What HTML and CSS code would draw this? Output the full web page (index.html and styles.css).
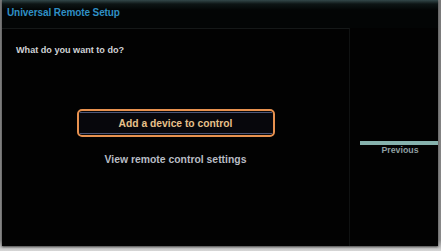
FILE: index.html
```html
<!DOCTYPE html>
<html>
<head>
<meta charset="utf-8">
<link rel="stylesheet" href="styles.css">
</head>
<body>
<div class="frame">
  <div class="screen">
    <div class="header"><span class="title">Universal Remote Setup</span></div>
    <div class="content">
      <div class="panel">
        <div class="question">What do you want to do?</div>
        <div class="options">
          <div class="option selected"><div class="option-inner">Add a device to control</div></div>
          <div class="option">View remote control settings</div>
        </div>
      </div>
      <div class="side">
        <div class="prev">Previous</div>
      </div>
    </div>
  </div>
</div>
</body>
</html>
```
FILE: styles.css
```css
html, body {
  margin: 0;
  padding: 0;
  background: #c9c9c9;
  width: 441px;
  height: 251px;
  overflow: hidden;
  font-family: "Liberation Sans", Arial, sans-serif;
  font-weight: bold;
}
.frame {
  width: 441px;
  height: 251px;
  padding: 0 3px 5px 2px;
  box-sizing: border-box;
  background: linear-gradient(to bottom, #7a7a7a 0, #8a8a8a 240px, #d8d8d8 251px);
}
.screen {
  width: 436px;
  height: 246px;
  background: #020202;
  display: flex;
  flex-direction: column;
  box-shadow: 0 1px 2px #444;
}
.header {
  height: 28px;
  box-sizing: border-box;
  padding: 2px 0 0 5px;
  background: linear-gradient(to bottom, #33484a 0, #0d1515 4px, #030505 10px);
}
.title {
  color: #2f8fc4;
  font-size: 10px;
  letter-spacing: -0.1px;
  line-height: 11px;
}
.content {
  flex: 1;
  display: flex;
}
.panel {
  width: 348px;
  border-top: 1px solid #151818;
  border-right: 1px solid #101212;
  box-sizing: border-box;
  display: flex;
  flex-direction: column;
}
.question {
  color: #d0d2d6;
  font-size: 9.1px;
  padding: 16px 0 0 14px;
  line-height: 10px;
}
.options {
  margin-top: 54px;
  display: flex;
  flex-direction: column;
  align-items: center;
  gap: 8px;
}
.option {
  width: 198px;
  height: 28px;
  box-sizing: border-box;
  display: flex;
  align-items: center;
  justify-content: center;
  color: #b8bcc4;
  font-size: 10.4px;
}
.option.selected {
  border: 2px solid #e7914f;
  border-radius: 5px;
  padding: 1px;
  background: #07070c;
}
.option-inner {
  width: 100%;
  height: 100%;
  box-sizing: border-box;
  border-top: 1px solid #4b5577;
  border-bottom: 1px solid #4b5577;
  display: flex;
  align-items: center;
  justify-content: center;
  color: #e6c08a;
  font-size: 10.3px;
}
.side {
  flex: 1;
  display: flex;
  flex-direction: column;
  padding-top: 113px;
  padding-left: 10px;
}
.prev {
  height: 14px;
  box-sizing: border-box;
  border-top: 4px solid #86b2ad;
  color: #8e9ea0;
  font-size: 8.8px;
  line-height: 10px;
  text-align: center;
  padding-left: 2px;
}
```
